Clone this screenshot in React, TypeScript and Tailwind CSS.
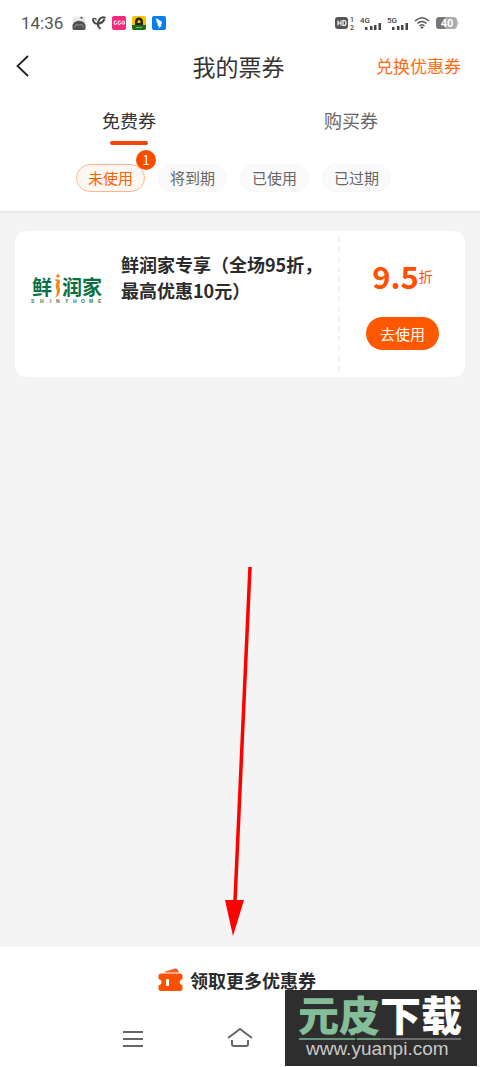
import type { ReactNode } from "react";
import clsx from "clsx";

interface Coupon {
  id: number;
  title: string;
  discount: string;
}

const filters = [
  { label: "未使用", count: 1 },
  { label: "将到期", count: 0 },
  { label: "已使用", count: 0 },
  { label: "已过期", count: 0 },
];

const coupons: Coupon[] = [
  { id: 1, title: "鲜润家专享（全场95折，最高优惠10元）", discount: "9.5" },
];

function Signal({ label }: { label: string }) {
  return (
    <svg viewBox="0 0 22 16" className="h-[16px] w-[22px] overflow-visible" fill="#444">
      <text x="0" y="8" fontSize="8" fontWeight="500" fontFamily="Roboto, sans-serif">
        {label}
      </text>
      <rect x="5" y="12" width="2.500" height="3" />
      <rect x="10" y="11" width="2.500" height="4" />
      <rect x="14" y="10" width="2.500" height="5" />
      <rect x="18.500" y="8" width="2.500" height="7" />
    </svg>
  );
}

function StatusBar() {
  return (
    <div className="flex h-[44px] items-center justify-between pt-[2px] pr-[20px] pl-[21px]">
      <div className="flex items-center">
        <span className="w-[51px] font-['Roboto','Noto_Sans_CJK_SC',sans-serif] text-[17px] leading-[20px] text-[#555]">
          14:36
        </span>
        <div className="flex items-center gap-[6px]">
          <svg viewBox="0 0 14 14" className="size-[14px]">
            <rect x="0.5" y="0.5" width="13" height="12" rx="3" fill="#e8e8e8" />
            <circle cx="9.500" cy="1.800" r="1" fill="#444" />
            <path d="M2 6.500Q7 3 12 6.500L13.500 9V12Q13.500 14 12 14H2Q.5 14 .5 12V9Z" fill="#505050" />
            <path d="M3 11.500Q2.500 8.500 5 8.500Q6 9.500 7 9Q8 9.500 9 8.500Q11.500 8.500 11 11.500" fill="none" stroke="#999" strokeWidth="1" />
          </svg>
          <svg viewBox="0 0 14 14" className="size-[14px]" fill="none" stroke="#484848">
            <path d="M1 2.500Q1 7.500 5 7.800Q10.500 7.500 12.500 3" strokeWidth="2" />
            <path d="M13.500 1.800Q9.500 0 7 4Q5 8 6.500 10.500L8.500 13" strokeWidth="2" />
            <path d="M1 2.500Q4.500 1.500 4 4.500" strokeWidth="1.200" />
          </svg>
          <svg viewBox="0 0 14 14" className="size-[14px]">
            <rect width="14" height="14" rx="2" fill="#f72b7d" />
            <path d="M4.500 5Q2 4 2 7Q2 9.500 4.500 8V7M8.500 5Q6 4 6 7Q6 9.500 8.500 8V7M12.300 8V5.500Q10 4 9.800 7Q10 9 12.300 8" fill="none" stroke="#fff" strokeWidth="1" />
          </svg>
          <svg viewBox="0 0 14 14" className="size-[14px]">
            <rect width="14" height="14" rx="2" fill="#f5c500" />
            <path d="M0 9H14V12Q14 14 12 14H2Q0 14 0 12Z" fill="#176c28" />
            <path d="M3 9V6Q3 1.500 7 1.500Q11 1.500 11 6V9Z" fill="#222" />
            <path d="M5.500 5Q7 3 8.500 5V7H5.500Z" fill="#f5c500" />
            <path d="M4 11.500H10" stroke="#9ab23b" />
          </svg>
          <svg viewBox="0 0 14 14" className="size-[14px]">
            <rect width="14" height="14" rx="2" fill="#087df0" />
            <path d="M4 2L9.500 5.500Q10.500 6.500 9.500 8L8.500 9.500H10L6.500 12.500L7 10H5.500L6 8Q4 6 4 2Z" fill="#fff" />
          </svg>
        </div>
      </div>

      <div className="flex items-center gap-[5px]">
        <svg viewBox="0 0 20 16" className="h-[16px] w-[20px] overflow-visible">
          <rect x="0" y="2" width="13" height="12" rx="3" fill="#555" />
          <path d="M3 5.500V10.500M6 5.500V10.500M3 8H6M8 5.500V10.500H9Q11 10.500 11 8Q11 5.500 9 5.500Z" fill="none" stroke="#fff" strokeWidth="1.200" />
          <text x="15" y="7" fontSize="7" fontWeight="500" fill="#444" fontFamily="Roboto, sans-serif">1</text>
          <text x="15" y="15" fontSize="7" fontWeight="500" fill="#444" fontFamily="Roboto, sans-serif">2</text>
        </svg>
        <Signal label="4G" />
        <Signal label="5G" />
        <svg viewBox="0 0 16 14" className="h-[14px] w-[16px]" fill="none" stroke="#555" strokeWidth="1.600">
          <path d="M1 5Q8 -1.500 15 5M3.500 7.500Q8 3.500 12.500 7.500M5.500 10Q8 7.500 10.500 10" />
          <path d="M8 13L6.200 11.200Q8 10 9.800 11.200Z" fill="#555" stroke="none" />
        </svg>
        <svg viewBox="0 0 25 14" className="h-[14px] w-[25px]">
          <rect x="1" y="1" width="21" height="12" rx="3.500" fill="#aaa" />
          <path d="M4.500 1H10V13H4.500Q1 13 1 9.500V4.500Q1 1 4.500 1Z" fill="#777" />
          <path d="M22.500 4Q24.500 7 22.500 10Z" fill="#aaa" />
          <text x="12" y="11" textAnchor="middle" fontSize="11" fontWeight="700" fill="#fff" fontFamily="Roboto, sans-serif">40</text>
        </svg>
      </div>
    </div>
  );
}

function Tab({ active, children }: { active?: boolean; children: ReactNode }) {
  return (
    <button
      type="button"
      className={clsx(
        "flex w-[222px] flex-col items-center text-[18px] leading-[26px]",
        active ? "text-[#333]" : "text-[#666]",
      )}
    >
      {children}
      {active && <span className="mt-[8px] h-[4px] w-[38px] rounded-full bg-[#f4450c]" />}
    </button>
  );
}

function BrandLogo() {
  return (
    <svg viewBox="0 0 72 32" className="w-[72px] shrink-0 overflow-visible" role="img" aria-label="鲜润家 SHINYHOME">
      <g fill="#087044" fontFamily="'Liberation Sans', 'Noto Sans CJK SC', sans-serif" fontSize="20" fontWeight="700">
        <text x="1" y="23">鲜</text>
        <text x="31" y="23">润</text>
        <text x="51" y="23">家</text>
      </g>
      <circle cx="27" cy="4" r="1.800" fill="#f28a1a" />
      <path d="M23.500 7.500Q30 6 29 10.500Q27.500 13 29 17Q29.500 23 24 26Q27 21 25.500 17.500Q23.500 13 26 10Z" fill="#f28a1a" />
      <text x="0 9 19 25 34 42 50 58 67" y="31" fontSize="5" fontWeight="700" fill="#287b58" fontFamily="'Liberation Sans', sans-serif">
        SHINYHOME
      </text>
    </svg>
  );
}

function CouponCard({ coupon }: { coupon: Coupon }) {
  return (
    <article className="flex min-h-[146px] rounded-[11px] bg-white">
      <div className="flex flex-1 gap-[18px] pt-[20px] pl-[16px]">
        <div className="pt-[21px]">
          <BrandLogo />
        </div>
        <h2 className="w-[202px] text-[18px] leading-[26px] font-bold text-[#2b2b2b]">{coupon.title}</h2>
      </div>
      <div className="my-[6px] border-l-2 border-dashed border-[#f1f1f1]" />
      <div className="flex w-[125px] flex-col items-center pt-[24px]">
        <p className="flex h-[42px] items-center text-[#ff5000]">
          <span className="text-[31px] leading-[42px] font-bold">{coupon.discount}</span>
          <span className="text-[14px]">折</span>
        </p>
        <button
          type="button"
          className="mt-[20px] h-[33px] w-[73px] rounded-full bg-[#ff5800] text-[15px] leading-[33px] text-white"
        >
          去使用
        </button>
      </div>
    </article>
  );
}

function Watermark() {
  return (
    <div className="absolute right-[3px] bottom-[1px] h-[76px] w-[192px] bg-[#2e2e2e]">
      <svg viewBox="0 0 192 76" className="size-full" role="img" aria-label="元皮下载 www.yuanpi.com">
        <g fontFamily="'Liberation Sans', 'Noto Sans CJK SC', sans-serif" fontSize="41" fontWeight="900">
          <text x="13" y="41" fill="#84bd99">元皮</text>
          <text x="95" y="41" fill="#fff">下载</text>
        </g>
        <path d="M14 49H95" stroke="#66977b" strokeWidth="2" />
        <path d="M95 49H176" stroke="#aaa" />
        <path d="M71 43V56M64 56H71" stroke="#222" strokeWidth="2" opacity="0.6" />
        <text x="21" y="65" fill="#c9c9c9" fontSize="19" fontFamily="'Liberation Sans', sans-serif">
          www.yuanpi.com
        </text>
      </svg>
    </div>
  );
}

export default function App() {
  return (
    <div className="relative flex min-h-screen flex-col bg-[#f4f4f4] font-['Noto_Sans_CJK_SC',sans-serif]">
      <header className="border-b-2 border-[#e8e8e8] bg-white pb-[19px]">
        <StatusBar />
        <div className="grid h-[43px] grid-cols-3 items-center pr-[19px] pl-[16px]">
          <button type="button" aria-label="返回" className="justify-self-start">
            <svg viewBox="0 0 13 22" className="h-[22px] w-[13px]" fill="none" stroke="#222" strokeWidth="1.800">
              <path d="M12 1L1.500 11L12 21" />
            </svg>
          </button>
          <h1 className="text-center text-[23px] leading-[32px] text-[#333]">我的票券</h1>
          <a href="#exchange" className="justify-self-end text-[17px] leading-[24px] whitespace-nowrap text-[#ff6a13]">
            兑换优惠券
          </a>
        </div>
        <nav className="flex items-start justify-center pt-[20px]">
          <Tab active>免费券</Tab>
          <Tab>购买券</Tab>
        </nav>
        <div className="mt-[19px] flex justify-center gap-[13px] pr-[13px]">
          {filters.map((filter) => (
            <button
              key={filter.label}
              type="button"
              className={clsx(
                "relative h-[28px] w-[69px] rounded-full border text-[15px] leading-[26px]",
                filter.count > 0
                  ? "border-[#ffb68f] bg-[#fff7f1] text-[#ff6200]"
                  : "border-[#f7f7f7] bg-[#fafafa] text-[#666]",
              )}
            >
              {filter.label}
              {filter.count > 0 && (
                <span className="absolute -top-[15px] -right-[12px] size-[20px] rounded-full bg-[#fa4b00] text-[13px] leading-[20px] text-white">
                  {filter.count}
                </span>
              )}
            </button>
          ))}
        </div>
      </header>

      <main className="flex-1 px-[15px] pt-[18px]">
        {coupons.map((coupon) => (
          <CouponCard key={coupon.id} coupon={coupon} />
        ))}
      </main>

      <svg viewBox="0 0 30 372" className="absolute bottom-[130px] left-1/2 -ml-[15px] h-[372px] w-[30px]">
        <path d="M25 2L10 336" stroke="#f00" strokeWidth="3.500" />
        <path d="M0 335H19L8 371Z" fill="#f00" />
      </svg>

      <footer className="bg-white">
        <button
          type="button"
          className="flex h-[66px] w-full items-center justify-center gap-[7px] pr-[6px] text-[18px] font-bold text-[#2b2b2b]"
        >
          <svg viewBox="0 0 25 24" className="h-[24px] w-[25px]">
            <path d="M6 4L17 .5Q19 0 20 2L21 4.500H7Z" fill="#f25a20" />
            <path d="M3 5.500H22Q24.500 5.500 24.500 8V11Q21.500 12 21.500 14T24.500 17.500V20.500Q24.500 23 22 23H3Q.5 23 .5 20.500V17.500Q3.500 16.500 3.500 14T.5 11V8Q.5 5.500 3 5.500Z" fill="#ff5000" />
            <rect x="8" y="11" width="3" height="7" rx="1" fill="#fff" />
          </svg>
          领取更多优惠券
        </button>
        <nav className="flex h-[54px] items-start gap-[84px] pt-[14px] pl-[123px]">
          <button type="button" aria-label="最近任务">
            <svg viewBox="0 0 20 24" className="h-[24px] w-[20px]" stroke="#666" strokeWidth="2">
              <path d="M0 5H20M0 12H20M0 19H20" />
            </svg>
          </button>
          <button type="button" aria-label="主页">
            <svg viewBox="0 0 26 24" className="h-[24px] w-[26px]" fill="none" stroke="#666" strokeWidth="2">
              <path d="M1 11L13 2L25 11M5 13V17Q5 19 7 19H19Q21 19 21 17V13" />
            </svg>
          </button>
        </nav>
      </footer>
      <Watermark />
    </div>
  );
}
